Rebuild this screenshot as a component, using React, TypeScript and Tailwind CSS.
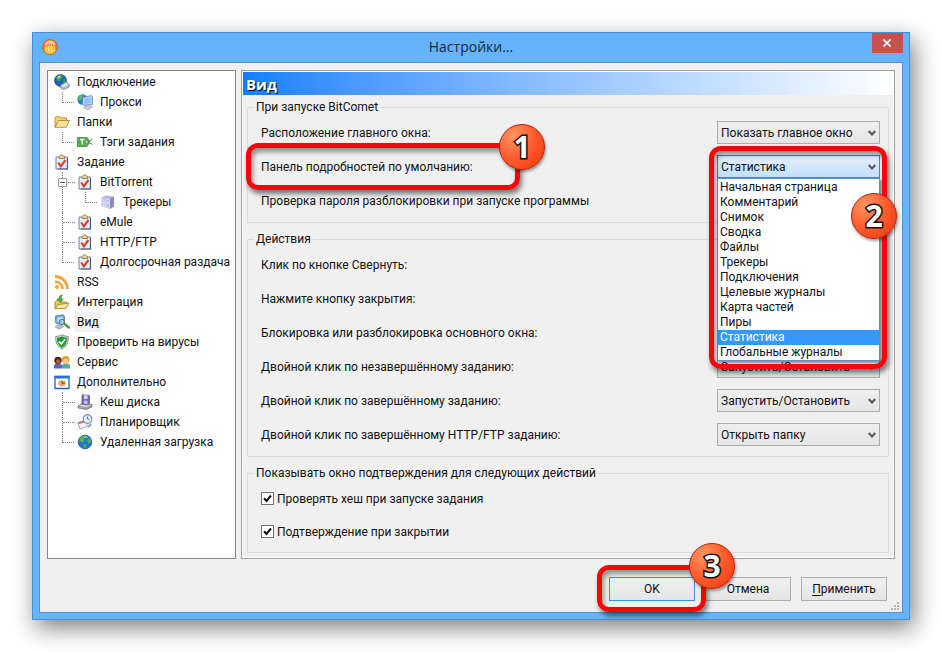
import { ReactNode, useId } from "react";

type IconName =
  | "network" | "proxy" | "folder" | "tag" | "task" | "server" | "rss" | "integration"
  | "view" | "shield" | "users" | "advanced" | "disk" | "planner" | "globe";

function Icon({ name }: { name: IconName }) {
  return (
    <svg viewBox="0 0 16 16" className="size-4 shrink-0" aria-hidden="true">
      {drawings[name]}
    </svg>
  );
}

const drawings: Record<IconName, ReactNode> = {
  network: (
    <>
      <circle cx="6.5" cy="6.5" r="6" fill="#1c63b4" stroke="#174a86" strokeWidth=".7" />
      <path d="M2 3.5Q4 .8 7.5 1L9 3 6.5 5 6 7.5 3.5 7Z" fill="#4aa53a" />
      <path d="M9 5l3 .2-.8 3L9 8Z" fill="#2f9a4a" />
      <path d="M3.5 2.8 6 1.6l.5 1.6-2 1.2Z" fill="#b7dcf5" />
      <path d="M6.500 11 12.500 7.500l3 3.700-.6 2.100L9.500 15.600 6 13.500Z" fill="#a9bccd" stroke="#6a8093" strokeWidth=".7" />
      <path d="M8 11.500 12.300 8.800l1.800 2.200-4.600 2.600Z" fill="#dfe9f1" />
    </>
  ),
  proxy: (
    <>
      <circle cx="5.5" cy="5.500" r="5.2" fill="#2a7fc9" />
      <path d="M1 3.500Q3 .4 6 .6L5.500 4 3.500 6.500 1.500 6Z" fill="#5fb36a" />
      <path d="M5.500 3.500 14.500 1.500 15.500 3v7.500L7 11.500 5.500 9.500Z" fill="#b9d5f3" stroke="#5b83b5" strokeWidth=".8" />
      <path d="M7.300 4.800 13.800 3.400v5.800l-6.500.8Z" fill="#8fc1f5" />
      <path d="M6.500 13.500 11.500 11l4 2-4.500 2.700Z" fill="#c9ccda" stroke="#8d90a5" strokeWidth=".6" />
    </>
  ),
  folder: (
    <>
      <path d="M1 13V4l1-1.300h4L7 4h5.500v2.500H5Z" fill="#f3d27a" stroke="#b08a2e" strokeWidth=".9" />
      <path d="M1 13.300 4.500 6.500h11L12.200 13.300Z" fill="#fbe49a" stroke="#b08a2e" strokeWidth=".9" />
    </>
  ),
  tag: (
    <>
      <path d="M.5 3.500h9.500l3 4.500-3 4.500H.5Z" fill="#53ad52" stroke="#3a8c3c" strokeWidth=".8" />
      <path d="M3 5.500h4.500M5.200 5.500v5" stroke="#fff" strokeWidth="1.300" />
      <circle cx="10" cy="8" r="1" fill="#e7f6e5" />
      <path d="M10.500 8 15.500 5M10.500 8l5 2.500" stroke="#67767a" strokeWidth=".9" fill="none" />
    </>
  ),
  task: (
    <>
      <path d="M2 3h11.500v12H2Z" fill="#e7ecf5" stroke="#6f82a8" strokeWidth="1" />
      <path d="M13.500 4v11H4" fill="none" stroke="#44598c" strokeWidth="1.200" />
      <path d="M5 4.500V2.500L7.500.6 10.500 2.500v2Z" fill="#efcf94" stroke="#9b7440" strokeWidth=".9" />
      <path d="M4.300 8.500 6.800 12.300 11.500 6" fill="none" stroke="#d2442b" strokeWidth="2.200" />
    </>
  ),
  server: (
    <>
      <path d="M1.500 3.500 5.500 1.500 14 2.500v9.800L10 15 1.500 12Z" fill="#b5b4dd" />
      <path d="M1.500 3.500 10 4.800V15L1.500 12Z" fill="#d3d2f0" />
      <path d="M10 4.800 14 2.500v9.800L10 15Z" fill="#8c8bbf" />
      <path d="M2.500 5.500 9 6.700" stroke="#b3b2dc" strokeWidth=".8" />
      <circle cx="7.800" cy="11.500" r=".8" fill="#6fae75" />
    </>
  ),
  rss: (
    <g fill="none" stroke="#f5a13c">
      <circle cx="3" cy="13" r="2" fill="#f5a13c" stroke="none" />
      <path d="M1 7.500A7.500 7.500 0 0 1 8.500 15" strokeWidth="2.600" />
      <path d="M1 2.500A12.500 12.500 0 0 1 13.500 15" strokeWidth="2.800" />
    </g>
  ),
  integration: (
    <>
      <path d="M1 14.500V8l2-1.500h3L7.500 8h5v2Z" fill="#e9cd6b" stroke="#a3852f" strokeWidth=".9" />
      <path d="M1 14.800 4 10.500l11-1.500-3 5.300Z" fill="#f7e79e" stroke="#a3852f" strokeWidth=".9" />
      <path d="M8.500.8Q4.800 1.200 5 5H3l3.300 3.500L9.300 5H7.200Q7 2.500 8.500.8Z" fill="#4fb53b" stroke="#2b7d25" strokeWidth=".6" />
    </>
  ),
  view: (
    <>
      <path d="M1.500 2 9.500.8 10.500 2.500v6.500L3.500 10 1.500 8.500Z" fill="#6fa6d8" stroke="#567a9f" strokeWidth=".8" />
      <path d="M3.300 3.600 9 2.800v4.600l-5.700.7Z" fill="#b9def7" />
      <path d="M1 12.800 5.500 10.500l4.500 2-5 2.800Z" fill="#b3bacf" stroke="#8790a8" strokeWidth=".6" />
      <circle cx="8" cy="8" r="2.600" fill="#9bcbe9" stroke="#5e7386" strokeWidth="1" />
      <path d="M10 9.500 14.800 13.500" stroke="#4a9a46" strokeWidth="2.400" strokeLinecap="round" />
    </>
  ),
  shield: (
    <>
      <path d="M8 .8Q11 2.500 14.300 2.500 15 11 8 15.300 1 11 1.700 2.500 5 2.500 8 .8Z" fill="#e2e9e2" stroke="#6c7a6e" strokeWidth=".8" />
      <path d="M8 2.200q2.500 1.400 5.200 1.500Q13.300 10.500 8 14 2.700 10.500 2.800 3.700 5.500 3.600 8 2.200Z" fill="#249a3a" />
      <path d="M5 7.500 7.300 10 11.200 5.300" fill="none" stroke="#fff" strokeWidth="1.700" />
    </>
  ),
  users: (
    <>
      <path d="M0 14.500V11Q4 7.500 8 11v3.500Z" fill="#4c66c9" />
      <path d="M8 14.500V11q4-3.500 8 0v3.500Z" fill="#55aaa8" />
      <circle cx="4" cy="6.500" r="3.700" fill="#46281f" />
      <circle cx="4.200" cy="7.500" r="2.300" fill="#b55a31" />
      <circle cx="11.700" cy="5.800" r="3.800" fill="#e8a127" />
      <circle cx="11.700" cy="7.200" r="2.400" fill="#f5c790" />
      <path d="M3 10.800 4 13 5.500 10.800Z" fill="#e8473a" />
    </>
  ),
  advanced: (
    <>
      <path d="M1 2.500h14v12H1Z" fill="#fff" stroke="#2365b8" strokeWidth="1.300" />
      <path d="M.5 1.800h15V4.500H.5Z" fill="#2c72cb" />
      <path d="M4 8.500Q5 6 8 7l3-.5 1 2.500-1.500 3-4 .5Q4 11.500 4 8.500Z" fill="#e4b256" />
      <path d="M7.500 6.500 8.500 9.500 11 9" fill="none" stroke="#865c23" strokeWidth="1.200" />
    </>
  ),
  disk: (
    <>
      <path d="M1 12 6 9l9 1.500v2.300L9.500 15.500 1 14Z" fill="#a3a3a9" stroke="#66666f" strokeWidth=".7" />
      <path d="M2 12 6.300 9.900 13.500 11 9.500 13Z" fill="#dcdce2" />
      <path d="M5 .8 12.500 1.500v8L10 11 5 10Z" fill="#7070b3" stroke="#525293" strokeWidth=".7" />
      <path d="M7 1.200 10.500 1.500V5L7 4.700Z" fill="#dcdcf3" />
      <path d="M7 6.500 10.500 6.800v3.500L7 9.700Z" fill="#c6c6e5" />
    </>
  ),
  planner: (
    <>
      <path d="M.8 8.500 8 6.500 10.500 12.500 3 15Z" fill="#f4f4f8" stroke="#8e8e9e" strokeWidth=".8" />
      <path d="M.8 8.500 8 6.500 8.700 8.300 1.500 10.300Z" fill="#e56e5a" />
      <circle cx="10.500" cy="5" r="4.300" fill="#e7eef5" stroke="#7991ab" strokeWidth="1.200" />
      <path d="M10.500 2.500V5l2 .8" fill="none" stroke="#49627d" strokeWidth=".9" />
      <path d="M10.500 11.500 14.500 9v3L11 14Z" fill="#9eaabb" />
    </>
  ),
  globe: (
    <>
      <circle cx="8" cy="8" r="6.800" fill="#2277cc" stroke="#184f8f" strokeWidth=".8" />
      <path d="M3 3.800Q5.500 1.300 8.500 1.700L8 4.500 6.500 5.300 7 7.500 5 8.500 3.500 7 2 7.200Z" fill="#58b54b" />
      <path d="M9.800 5.500 13 4l1.500 2.700-1 2.500-2.500.3Z" fill="#4bad52" />
      <path d="M6.500 10 9.500 10.500 9 13.800 7.300 14Z" fill="#4bad52" />
      <path d="M7 3.500 9.500 2.500 10.500 4" fill="none" stroke="#b8e4ff" strokeWidth="1" />
    </>
  ),
};

type Guide = "corner" | "tee" | "bar";
type Item = { label: string; icon: IconName; guides?: Guide[]; selected?: boolean; expander?: boolean };

const tree: Item[] = [
  { label: "Подключение", icon: "network" },
  { label: "Прокси", icon: "proxy", guides: ["corner"] },
  { label: "Папки", icon: "folder" },
  { label: "Тэги задания", icon: "tag", guides: ["corner"] },
  { label: "Задание", icon: "task" },
  { label: "BitTorrent", icon: "task", guides: ["tee"], expander: true },
  { label: "Трекеры", icon: "server", guides: ["bar", "corner"] },
  { label: "eMule", icon: "task", guides: ["tee"] },
  { label: "HTTP/FTP", icon: "task", guides: ["tee"] },
  { label: "Долгосрочная раздача", icon: "task", guides: ["corner"] },
  { label: "RSS", icon: "rss" },
  { label: "Интеграция", icon: "integration" },
  { label: "Вид", icon: "view", selected: true },
  { label: "Проверить на вирусы", icon: "shield" },
  { label: "Сервис", icon: "users" },
  { label: "Дополнительно", icon: "advanced" },
  { label: "Кеш диска", icon: "disk", guides: ["tee"] },
  { label: "Планировщик", icon: "planner", guides: ["tee"] },
  { label: "Удаленная загрузка", icon: "globe", guides: ["corner"] },
];

function GuideCell({ kind }: { kind: Guide }) {
  return (
    <span className="h-full w-[23px] shrink-0 pl-2">
      {kind === "corner" && <span className="block h-[11px] w-3 border-b border-l border-dotted border-[#808080]" />}
      {kind === "tee" && (
        <span className="block h-full border-l border-dotted border-[#808080]">
          <span className="block h-[11px] w-3 border-b border-dotted border-[#808080]" />
        </span>
      )}
      {kind === "bar" && <span className="block h-full border-l border-dotted border-[#808080]" />}
    </span>
  );
}

function Tree() {
  return (
    <ul role="tree" aria-label="Разделы" className="w-[189px] shrink-0 border border-[#828790] bg-white pt-px pl-1.5">
      {tree.map((item) => (
        <li
          key={item.label}
          role="treeitem"
          aria-selected={!!item.selected}
          className="relative flex h-5 items-center"
        >
          {item.guides?.map((kind, i) => <GuideCell key={i} kind={kind} />)}
          {item.expander && (
            <button aria-label="Свернуть ветку" className="absolute top-1.5 left-1 flex size-[9px] items-center justify-center rounded-[1px] border border-[#9a9a9a] bg-white">
              <span className="h-px w-[5px] bg-[#3b5ba5]" />
            </button>
          )}
          <Icon name={item.icon} />
          <span className={item.selected ? "ml-[5px] bg-[#f0f0f0] px-0.5 leading-5" : "ml-[7px] leading-5"}>
            {item.label}
          </span>
        </li>
      ))}
    </ul>
  );
}

function Mark({ n, frame, badge }: { n: number; frame: string; badge: string }) {
  return (
    <div
      className={`pointer-events-none absolute z-20 rounded-xl border-[5px] border-[#f20808] shadow-[2px_4px_5px_rgba(0,0,0,0.5),inset_2px_4px_5px_rgba(0,0,0,0.4)] ${frame}`}
    >
      <span
        className={`absolute flex size-[46px] items-center justify-center rounded-full border border-[#b3200a] bg-radial-[at_30%_25%] from-[#ff9560] via-[#ff5a2c] to-[#f0330c] font-['Open_Sans',sans-serif] text-[30px] leading-none font-bold text-white shadow-[1px_2px_3px_rgba(0,0,0,0.4)] [-webkit-text-stroke:3px_#111] [paint-order:stroke] ${badge}`}
      >
        {n}
      </span>
    </div>
  );
}

function Combo({ id, value, open, children }: { id: string; value: string; open?: boolean; children?: ReactNode }) {
  return (
    <div className="relative mb-px w-[163px] shrink-0">
      <select
        id={id}
        defaultValue={value}
        className={`block h-[23px] w-full appearance-none border bg-linear-to-b pr-5 pl-[3px] ${
          open ? "border-[#4a86bd] from-[#e4f0fc] to-[#c2dffb]" : "border-[#acacac] from-[#f0f0f0] to-[#e5e5e5]"
        }`}
      >
        <option>{value}</option>
      </select>
      <svg viewBox="0 0 8 7" className="pointer-events-none absolute top-[9px] right-1 h-[7px] w-2" aria-hidden="true">
        <path d="M.7 1 4 4.500 7.300 1" fill="none" stroke="#555" strokeWidth="2" />
      </svg>
      {children}
    </div>
  );
}

const choices = [
  "Начальная страница", "Комментарий", "Снимок", "Сводка", "Файлы", "Трекеры",
  "Подключения", "Целевые журналы", "Карта частей", "Пиры", "Статистика", "Глобальные журналы",
];

function Row({ label, value, mark, children, open }: { label: string; value?: string; mark?: ReactNode; children?: ReactNode; open?: boolean }) {
  const id = useId();
  return (
    <div className="relative flex h-[34px] items-center justify-between">
      <label htmlFor={value ? id : undefined}>{label}</label>
      {mark}
      {value && <Combo id={id} value={value} open={open}>{children}</Combo>}
    </div>
  );
}

function Group({ title, children }: { title: string; children: ReactNode }) {
  return (
    <fieldset className="min-w-0 border border-[#dcdcdc] pt-px pr-2 pb-1 pl-[13px]">
      <legend className="-ml-[7px] px-0.5 leading-4">{title}</legend>
      {children}
    </fieldset>
  );
}

function Check({ label }: { label: string }) {
  return (
    <label className="flex h-[33px] items-center gap-[3px]">
      <span className="relative size-[13px]">
        <input type="checkbox" defaultChecked className="block size-full appearance-none border border-[#707070] bg-white" />
        <svg viewBox="0 0 13 13" className="pointer-events-none absolute inset-0 size-full" aria-hidden="true">
          <path d="M3 6.300 5.500 9 10 3.500" fill="none" stroke="#111" strokeWidth="2" />
        </svg>
      </span>
      {label}
    </label>
  );
}

const buttonClass = "block h-6 w-full border bg-linear-to-b from-[#f0f0f0] to-[#e5e5e5]";

export default function App() {
  return (
    <main className="min-h-screen bg-white p-8 font-[Roboto,'Open_Sans',sans-serif] text-[12px] leading-4 text-[#111]">
      <section className="border border-[#468fd2] bg-[#66b2fb] pb-1.5 shadow-[4px_8px_22px_0px_rgba(0,0,0,0.5)]">
        <header className="flex h-[29px] justify-between">
          <div className="w-[37px] pt-1.5 pl-[9px]">
            <svg viewBox="0 0 16 16" className="size-4" aria-hidden="true">
              <circle cx="8" cy="8" r="7.500" fill="#f07a1c" stroke="#c4622a" strokeWidth=".8" />
              <ellipse cx="8" cy="11" rx="5.500" ry="4" fill="#ffc62e" />
              <path d="M2.500 6Q3.500 1.500 8 1.500T13.500 6Q8 3.500 2.500 6Z" fill="#f8c79a" />
              <path d="M3.500 12Q3 7 5.500 5M6.500 13Q6 8 7.500 5M9.500 13Q10.500 8 9 5M12.500 12Q13.500 8 11 5" fill="none" stroke="#fff0cc" strokeWidth=".7" />
            </svg>
          </div>
          <h1 className="pt-1 font-['Open_Sans',sans-serif] text-[14px] leading-5 text-[#14283c]">Настройки...</h1>
          <div className="w-[37px]">
            <button aria-label="Закрыть" className="flex h-5 w-[31px] items-center justify-center bg-[#c75050]">
              <svg viewBox="0 0 8 8" className="size-2" aria-hidden="true">
                <path d="M.5.5 7.500 7.500M7.500.5.5 7.500" stroke="#fff" strokeWidth="1.600" />
              </svg>
            </button>
          </div>
        </header>

        <div className="mx-1.5 border border-[#4e94d3] bg-[#f0f0f0] pt-[7px]">
          <div className="flex gap-[5px] px-[7px]">
            <Tree />
            <div className="min-w-0 flex-1 border border-[#a0a0a0] bg-white p-px">
              <h2 className="h-[23px] bg-linear-to-r from-[#0a80ff] to-white pl-[3px] font-['Open_Sans',sans-serif] text-[15px] leading-6 font-bold text-white [text-shadow:1px_1px_1px_#000]">
                Вид
              </h2>
              <div className="flex flex-col gap-2 bg-[#f0f0f0] p-1">
                <Group title="При запуске BitComet">
                  <Row label="Расположение главного окна:" value="Показать главное окно" />
                  <Row
                    label="Панель подробностей по умолчанию:"
                    value="Статистика"
                    open
                    mark={<Mark n={1} frame="-left-[15px] -top-[7px] h-[47px] w-[274px]" badge="-right-[30px] -top-[24px]" />}
                  >
                    <ul role="listbox" aria-label="Панель подробностей" className="absolute top-[23px] left-0 z-10 w-full border border-[#5a93c9] bg-white pt-px shadow-[2px_2px_2px_rgba(0,0,0,0.4)]">
                      {choices.map((c) => (
                        <li
                          key={c}
                          role="option"
                          aria-selected={c === "Статистика"}
                          className={`h-[15px] pl-0.5 leading-[15px] whitespace-nowrap ${c === "Статистика" ? "bg-[#3399ff] text-white" : ""}`}
                        >
                          {c}
                        </li>
                      ))}
                    </ul>
                    <Mark n={2} frame="-left-2 -top-[9px] h-[223px] w-[178px]" badge="-right-[15px] top-[42px]" />
                  </Row>
                  <Row label="Проверка пароля разблокировки при запуске программы" />
                </Group>
                <Group title="Действия">
                  <Row label="Клик по кнопке Свернуть:" />
                  <Row label="Нажмите кнопку закрытия:" />
                  <Row label="Блокировка или разблокировка основного окна:" />
                  <Row label="Двойной клик по незавершённому заданию:" value="Запустить/Остановить" />
                  <Row label="Двойной клик по завершённому заданию:" value="Запустить/Остановить" />
                  <Row label="Двойной клик по завершённому HTTP/FTP заданию:" value="Открыть папку" />
                </Group>
                <Group title="Показывать окно подтверждения для следующих действий">
                  <Check label="Проверять хеш при запуске задания" />
                  <Check label="Подтверждение при закрытии" />
                </Group>
              </div>
            </div>
          </div>

          <footer className="relative flex justify-end gap-2.5 pt-[18px] pr-[15px] pb-[11px]">
            <div className="relative w-[86px]">
              <button className={`${buttonClass} border-[#3c8fe6]`}>OK</button>
              <Mark n={3} frame="-left-3 -top-3 h-[47px] w-[109px]" badge="-right-[34px] -top-[27px]" />
            </div>
            <div className="w-[86px]">
              <button className={`${buttonClass} border-[#acacac]`}>Отмена</button>
            </div>
            <div className="w-[86px]">
              <button className={`${buttonClass} border-[#acacac]`}>
                <span className="underline underline-offset-2">П</span>рименить
              </button>
            </div>
            <svg viewBox="0 0 8 8" className="absolute right-[3px] bottom-0.5 size-2" fill="#b4b4b4" aria-hidden="true">
              <path d="M6 0h2v2H6zM3 3h2v2H3zM6 3h2v2H6zM0 6h2v2H0zM3 6h2v2H3zM6 6h2v2H6z" />
            </svg>
          </footer>
        </div>
      </section>
    </main>
  );
}
